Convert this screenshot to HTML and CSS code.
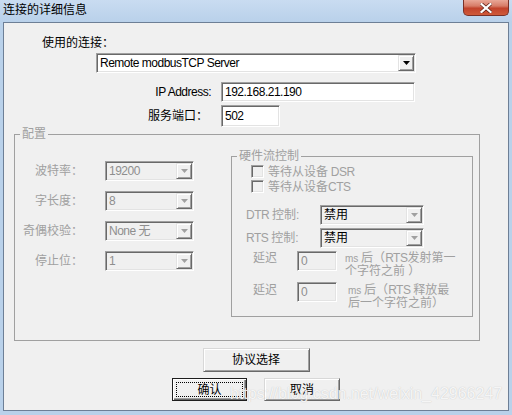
FILE: index.html
```html
<!DOCTYPE html>
<html lang="zh-CN">
<head>
<meta charset="utf-8">
<title>连接的详细信息</title>
<link rel="stylesheet" href="styles.css">
</head>
<body>
<div class="window">
  <div class="titlebar">
    <span class="title">连接的详细信息</span>
    <div class="close">
      <svg width="12" height="10" viewBox="0 0 12 10"><path d="M1.5 1 L10.5 9 M10.5 1 L1.5 9" stroke="#5a1d14" stroke-width="3.6" stroke-linecap="square"/><path d="M1.5 1 L10.5 9 M10.5 1 L1.5 9" stroke="#fff" stroke-width="2.2" stroke-linecap="square"/></svg>
    </div>
  </div>
  <div class="frame">
    <div class="conn-label">使用的连接：</div>
    <div class="combo main">
      <span class="combo-text l">Remote modbusTCP Server</span>
      <span class="drop"><svg width="7" height="4" viewBox="0 0 7 4"><path d="M0 0h7L3.5 4z"/></svg></span>
    </div>
    <div class="fields">
      <span class="field-label l">IP Address:</span>
      <div class="edit ip l">192.168.21.190</div>
      <span class="field-label port-label">服务端口：</span>
      <div class="edit port l">502</div>
    </div>
    <fieldset class="group config">
      <legend>配置</legend>
      <div class="config-body">
        <div class="serial">
          <span class="s-label">波特率：</span>
          <div class="combo off"><span class="combo-text l">19200</span><span class="drop"><svg width="7" height="4" viewBox="0 0 7 4"><path d="M0 0h7L3.5 4z"/></svg></span></div>
          <span class="s-label">字长度：</span>
          <div class="combo off"><span class="combo-text l">8</span><span class="drop"><svg width="7" height="4" viewBox="0 0 7 4"><path d="M0 0h7L3.5 4z"/></svg></span></div>
          <span class="s-label">奇偶校验：</span>
          <div class="combo off"><span class="combo-text"><span class="l">None </span>无</span><span class="drop"><svg width="7" height="4" viewBox="0 0 7 4"><path d="M0 0h7L3.5 4z"/></svg></span></div>
          <span class="s-label">停止位：</span>
          <div class="combo off"><span class="combo-text l">1</span><span class="drop"><svg width="7" height="4" viewBox="0 0 7 4"><path d="M0 0h7L3.5 4z"/></svg></span></div>
        </div>
        <fieldset class="group flow">
          <legend>硬件流控制</legend>
          <div class="check-row"><span class="checkbox"></span><span>等待从设备<span class="l"> DSR</span></span></div>
          <div class="check-row"><span class="checkbox"></span><span>等待从设备<span class="l">CTS</span></span></div>
          <div class="ctl-row dtr">
            <span class="ctl-label"><span class="l">DTR </span>控制<span class="l">:</span></span>
            <div class="combo flowcombo"><span class="combo-text">禁用</span><span class="drop"><svg width="7" height="4" viewBox="0 0 7 4"><path d="M0 0h7L3.5 4z"/></svg></span></div>
          </div>
          <div class="ctl-row rts">
            <span class="ctl-label"><span class="l">RTS </span>控制<span class="l">:</span></span>
            <div class="combo flowcombo"><span class="combo-text">禁用</span><span class="drop"><svg width="7" height="4" viewBox="0 0 7 4"><path d="M0 0h7L3.5 4z"/></svg></span></div>
          </div>
          <div class="delay-row first">
            <span class="delay-label">延迟</span>
            <div class="delay-edit l">0</div>
            <span class="delay-text"><span class="l ms">ms </span>后（<span class="l">RTS</span>发射第一<br>个字符之前 ）</span>
          </div>
          <div class="delay-row second">
            <span class="delay-label">延迟</span>
            <div class="delay-edit l">0</div>
            <span class="delay-text"><span class="l ms">ms </span>后（<span class="l">RTS </span>释放最<br>后一个字符之前）</span>
          </div>
        </fieldset>
      </div>
    </fieldset>
    <div class="btn proto">协议选择</div>
    <div class="btn-row">
      <div class="btn default"><span class="focus">确认</span></div>
      <div class="btn cancel">取消</div>
    </div>
  </div>
</div>
<div class="watermark">https://blog.csdn.net/weixin_42966247</div>
</body>
</html>
```
FILE: styles.css
```css
* { box-sizing: border-box; }

body {
  margin: 0;
  width: 512px;
  height: 415px;
  overflow: hidden;
  position: relative;
  background: #b9d1ea;
}

.window {
  font: 12px/14px "Liberation Sans", "Noto Sans CJK SC", sans-serif;
  color: #000;
}

/* narrower Latin runs (Tahoma-like metrics) */
.l {
  letter-spacing: -0.5px;
}

.l.ms {
  font-size: 10px;
  letter-spacing: 0;
}

.titlebar {
  height: 22px;
  display: flex;
  align-items: flex-start;
  background: linear-gradient(#c9dcf1, #b9d1ea);
}

.title {
  padding: 3px 0 0 3px;
}

.close {
  margin-left: auto;
  margin-right: 3px;
  width: 46px;
  height: 16px;
  border: 1px solid #7a3128;
  border-top: 0;
  border-radius: 0 0 5px 5px;
  background: linear-gradient(#e9a797 0%, #d77c68 40%, #c2432c 55%, #cf5a3a 100%);
  display: flex;
  align-items: center;
  justify-content: center;
}

.frame {
  margin: 0 3px;
  height: 389px;
  border: 1px solid #6d7f96;
  background: #f0f0f0;
  padding-top: 12px;
}

.conn-label {
  margin-left: 38px;
  line-height: 16px;
}

/* combo boxes */
.combo {
  display: flex;
  align-items: center;
  height: 20px;
  padding: 1px;
  border: 1px solid;
  border-color: #a0a0a0 #fff #fff #a0a0a0;
  box-shadow: inset 1px 1px #696969, inset -1px -1px #e3e3e3;
  background: #fff;
}

.combo-text {
  flex: 1;
  padding-left: 2px;
  white-space: nowrap;
}

.drop {
  width: 16px;
  height: 16px;
  display: flex;
  align-items: center;
  justify-content: center;
  border: 1px solid;
  border-color: #e3e3e3 #696969 #696969 #e3e3e3;
  box-shadow: inset 1px 1px #fff, inset -1px -1px #a0a0a0;
  background: #f0f0f0;
}

.drop svg { fill: #000; display: block; }

.main {
  margin: 2px 0 0 92px;
  width: 320px;
}

.combo.off, .combo.flowcombo {
  background: #f0f0f0;
}

.combo.off .combo-text { color: #8e8e8e; }

.combo.off .drop svg, .combo.flowcombo .drop svg { fill: #a0a0a0; }

/* IP / port */
.fields {
  display: grid;
  grid-template-columns: 217px 194px;
  grid-template-rows: 20px 22px;
  row-gap: 3px;
  margin-top: 9px;
  align-items: center;
}

.field-label {
  text-align: right;
  padding-right: 10px;
  white-space: nowrap;
}

.port-label { padding-right: 13px; }

.edit {
  height: 20px;
  border: 1px solid;
  border-color: #a0a0a0 #fff #fff #a0a0a0;
  box-shadow: inset 1px 1px #696969, inset -1px -1px #e3e3e3;
  background: #fff;
  padding: 2px 0 0 3px;
}

.edit.port {
  width: 59px;
  height: 22px;
  padding-top: 3px;
}

/* group boxes */
.group {
  margin: 0;
  padding: 0;
  min-width: 0;
  border: 1px solid #a0a0a0;
}

.group legend {
  margin-left: 5px;
  padding: 0 2px;
  line-height: 14px;
  color: #a0a0a0;
}

.config {
  margin-left: 10px;
  width: 466px;
  padding-bottom: 23px;
}

.config-body {
  display: flex;
  align-items: flex-start;
}

.serial {
  margin-top: 20px;
  display: grid;
  grid-template-columns: 68px 89px;
  grid-auto-rows: 20px;
  column-gap: 22px;
  row-gap: 10px;
  align-items: center;
}

.s-label {
  text-align: right;
  color: #a0a0a0;
  white-space: nowrap;
}

.flow {
  margin: 8px 0 0 37px;
  width: 242px;
  padding: 1px 0 3px 0;
}

.check-row {
  display: flex;
  align-items: center;
  height: 15px;
  margin-left: 19px;
  color: #a0a0a0;
}

.checkbox {
  width: 13px;
  height: 13px;
  margin-right: 4px;
  border: 1px solid;
  border-color: #a0a0a0 #fff #fff #a0a0a0;
  box-shadow: inset 1px 1px #696969, inset -1px -1px #e3e3e3;
  background: #f0f0f0;
}

.ctl-row {
  display: flex;
  align-items: center;
  height: 20px;
  margin-left: 14px;
}

.ctl-row.dtr { margin-top: 11px; }
.ctl-row.rts { margin-top: 3px; }

.ctl-label {
  width: 74px;
  color: #a0a0a0;
  white-space: nowrap;
}

.flowcombo { width: 104px; }

.delay-row {
  display: flex;
  align-items: flex-start;
  height: 31px;
  margin-left: 21px;
}

.delay-row.first { margin-top: 3px; }

.delay-label {
  width: 44px;
  line-height: 13px;
  margin-top: 1px;
  color: #a0a0a0;
}

.delay-edit {
  width: 40px;
  height: 20px;
  border: 1px solid;
  border-color: #a0a0a0 #fff #fff #a0a0a0;
  box-shadow: inset 1px 1px #696969, inset -1px -1px #e3e3e3;
  background: #f0f0f0;
  color: #8e8e8e;
  padding: 2px 0 0 3px;
}

.delay-text {
  margin: 1px 0 0 8px;
  line-height: 13px;
  color: #a0a0a0;
  white-space: nowrap;
}

.delay-row.second .delay-text {
  margin: 2px 0 0 11px;
}

.delay-row.second .delay-label { margin-top: 2px; }

/* buttons */
.btn {
  width: 75px;
  height: 23px;
  display: flex;
  align-items: center;
  justify-content: center;
  border: 1px solid;
  border-color: #d8d8d8 #696969 #696969 #d8d8d8;
  box-shadow: inset 1px 1px #fff, inset -1px -1px #a0a0a0;
  background: #f0f0f0;
}

.proto {
  width: 107px;
  height: 24px;
  margin: 7px auto 0;
}

.btn-row {
  display: flex;
  justify-content: center;
  gap: 17px;
  margin-top: 6px;
}

.cancel { width: 76px; }

.btn.default {
  border: 1px solid #1e1e1e;
  box-shadow: inset 1px 1px #fff, inset -1px -1px #696969, inset -2px -2px #a0a0a0;
  align-items: stretch;
}

.focus {
  flex: 1;
  margin: 3px;
  border: 1px dotted #000;
  display: flex;
  align-items: center;
  justify-content: center;
}

.watermark {
  position: absolute;
  left: 230px;
  top: 386px;
  font: 16px/16px "Liberation Sans", sans-serif;
  color: rgba(255, 255, 255, 0.85);
  text-shadow: 0 0 1px rgba(110, 110, 110, 0.4);
  white-space: nowrap;
  pointer-events: none;
}
```
